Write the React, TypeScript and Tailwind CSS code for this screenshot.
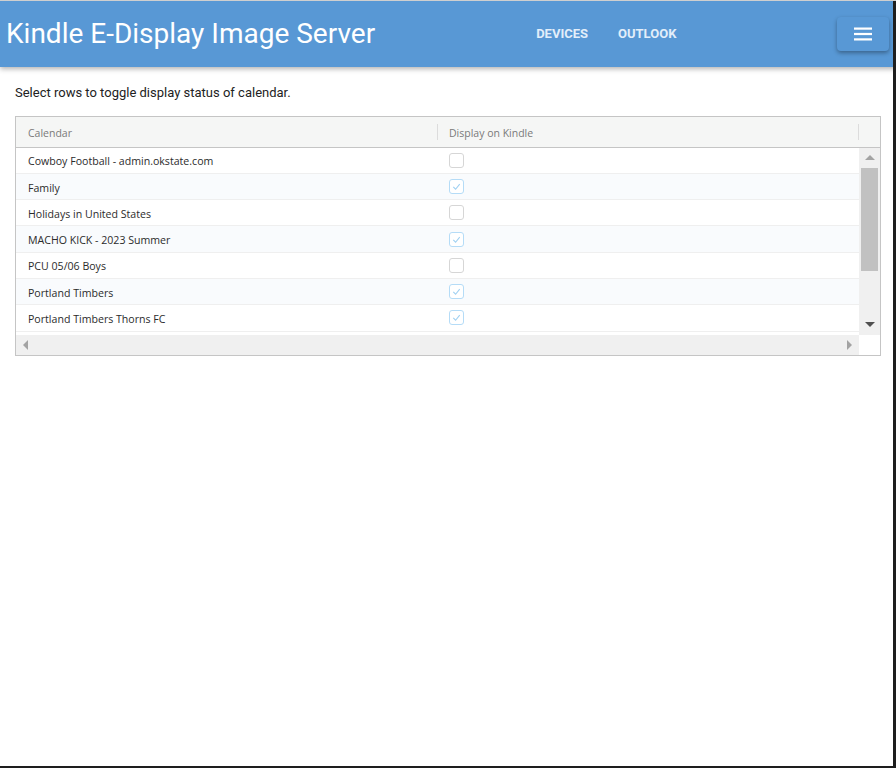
import React, { useState } from 'react';

const calendars = [
  { name: 'Cowboy Football - admin.okstate.com', display: false },
  { name: 'Family', display: true },
  { name: 'Holidays in United States', display: false },
  { name: 'MACHO KICK - 2023 Summer', display: true },
  { name: 'PCU 05/06 Boys', display: false },
  { name: 'Portland Timbers', display: true },
  { name: 'Portland Timbers Thorns FC', display: true },
];

const CheckBox: React.FC<{ checked: boolean }> = ({ checked }) => (
  <span
    className={`flex h-[15px] w-[15px] items-center justify-center rounded-[3px] border bg-white ${checked ? 'border-[#b5dcf7]' : 'border-[#d6d6d6]'}`}
  >
    {checked && (
      <svg className="h-[11px] w-[11px]" viewBox="0 0 12 12" fill="none" stroke="#9fd0f2" strokeWidth="1.2">
        <path d="M2.5 6.5l2.5 2.5 4.5-5.5" />
      </svg>
    )}
  </span>
);

export default function App() {
  const [rows, setRows] = useState(calendars);

  const toggle = (i: number) => {
    setRows(r => r.map((c, j) => (j === i ? { ...c, display: !c.display } : c)));
  };

  return (
    <div className="relative h-[768px] w-[896px] overflow-hidden border-t border-[#cfcfcf] bg-white font-['Roboto',sans-serif]">
      <header className="flex h-[66px] items-center bg-[#5898d5] pl-[6px] pr-[7px] shadow-[0_2px_5px_rgba(0,0,0,0.3)]">
        <h1 className="text-[28px] leading-none text-white">Kindle E-Display Image Server</h1>
        <nav className="ml-[161px] flex gap-[30px] text-[13px] font-bold text-[#e2eefa]">
          <a className="cursor-pointer">DEVICES</a>
          <a className="cursor-pointer">OUTLOOK</a>
        </nav>
        <button className="ml-auto flex h-[34px] w-[52px] items-center justify-center rounded-[4px] bg-[#5898d5] shadow-[0_2px_4px_rgba(0,0,0,0.35)]">
          <svg className="h-[14px] w-[18px]" viewBox="0 0 18 14" fill="#ffffff">
            <rect x="0" y="0.5" width="18" height="2.2" />
            <rect x="0" y="5.9" width="18" height="2.2" />
            <rect x="0" y="11.3" width="18" height="2.2" />
          </svg>
        </button>
      </header>

      <main className="px-[15px]">
        <p className="mt-[16px] text-[13px] text-[#222]">Select rows to toggle display status of calendar.</p>

        <div className="mt-[13px] w-[866px] border border-[#c5c5c5] font-['Open_Sans',sans-serif]">
          <div className="flex h-[31px] items-center border-b border-[#c5c5c5] bg-[#f5f6f5] text-[10.5px] text-[#7a7a7a]">
            <div className="flex h-full w-[421px] translate-y-[2px] items-center pl-[12px]">Calendar</div>
            <div className="h-[16px] w-px bg-[#dcdcdc]" />
            <div className="w-[420px] translate-y-[2px] pl-[11px]">Display on Kindle</div>
            <div className="h-[16px] w-px bg-[#dcdcdc]" />
          </div>

          <div className="flex h-[187px]">
            <div className="flex flex-1 flex-col overflow-hidden bg-white">
              {rows.map((c, i) => (
                <div
                  key={c.name}
                  onClick={() => toggle(i)}
                  className={`flex h-[26.3px] shrink-0 cursor-pointer items-center border-b border-[#efefef] text-[10.6px] text-[#2b2b2b] ${i % 2 ? 'bg-[#f9fbfd]' : 'bg-white'}`}
                >
                  <div className="w-[422px] translate-y-[2px] pl-[12px]">{c.name}</div>
                  <div className="pl-[11px]">
                    <CheckBox checked={c.display} />
                  </div>
                </div>
              ))}
            </div>
            <div className="flex w-[21px] flex-col items-center bg-[#f0f0f0] pt-[7px]">
              <svg className="h-[5px] w-[10px]" viewBox="0 0 10 5" fill="#a3a3a3">
                <path d="M0 5L5 0l5 5z" />
              </svg>
              <div className="mt-[8px] h-[103px] w-[17px] bg-[#c1c1c1]" />
              <svg className="mt-auto mb-[8px] h-[5px] w-[10px]" viewBox="0 0 10 5" fill="#505050">
                <path d="M0 0h10L5 5z" />
              </svg>
            </div>
          </div>

          <div className="flex h-[20px]">
            <div className="flex flex-1 items-center justify-between bg-[#f0f0f0] px-[7px]">
              <svg className="h-[10px] w-[5px]" viewBox="0 0 5 10" fill="#a3a3a3">
                <path d="M5 0v10L0 5z" />
              </svg>
              <svg className="h-[10px] w-[5px]" viewBox="0 0 5 10" fill="#a3a3a3">
                <path d="M0 0v10l5-5z" />
              </svg>
            </div>
            <div className="w-[21px] bg-white" />
          </div>
        </div>
      </main>

      <div className="absolute right-0 top-0 h-full w-[3px] bg-[#1e1e1e]" />
      <div className="absolute bottom-0 left-0 h-[2px] w-full bg-[#1e1e1e]" />
    </div>
  );
}
